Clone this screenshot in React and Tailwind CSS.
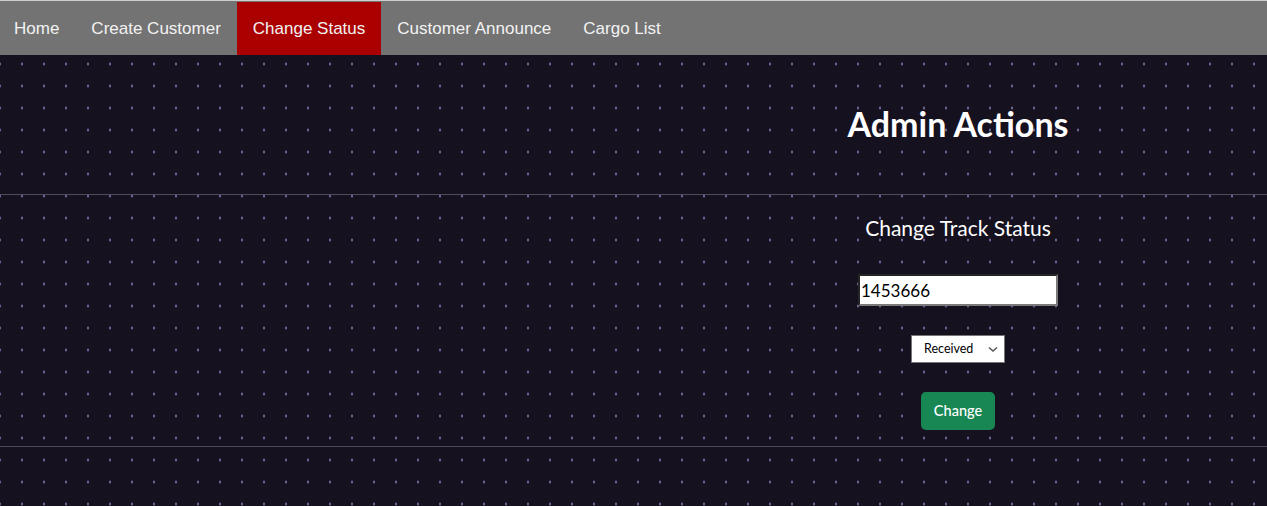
import React from "react";

export default function App() {
  const navItems = ["Home", "Create Customer", "Change Status", "Customer Announce", "Cargo List"];
  return (
    <div className="min-h-[506px] bg-[#15111f] bg-[image:radial-gradient(ellipse_0.8px_1.3px,#6a6494_0.7px,transparent_1.2px)] bg-[size:22px_22px] bg-[position:-11px_9px] font-['Lato',sans-serif]">
      <nav className="border-t border-[#cfcfcf] bg-[#737373] pt-[1px] font-['Liberation_Sans',Arial,sans-serif] text-[17px] text-[#f2f2f2]">
        <div className="-ml-[2px] flex">
          {navItems.map((item) => (
            <a
              key={item}
              className={
                "flex h-[53px] items-center px-4 " +
                (item === "Change Status" ? "bg-[#aa0000]" : "")
              }
            >
              {item}
            </a>
          ))}
        </div>
      </nav>
      <div className="flex">
        <div className="w-[649px]" />
        <div className="flex h-[139px] flex-1 justify-center pt-[49px]">
          <h1 className="text-[34px] font-bold leading-[40px] text-white">Admin Actions</h1>
        </div>
      </div>
      <div className="h-px bg-[#4f4a5c]" />
      <div className="flex">
        <div className="w-[649px]" />
        <div className="flex flex-1 flex-col items-center pt-[19px] pb-[16px]">
          <h2 className="text-[21px] leading-[28px] text-white">Change Track Status</h2>
          <input
            defaultValue="1453666"
            className="mt-[32px] h-[32px] w-[200px] border-2 border-[#7a7a7a] [border-style:inset] bg-white px-[1px] text-[17px] text-black outline-none"
          />
          <div className="relative mt-[29px] h-[28px] w-[94px] border border-[#767676] bg-white">
            <div className="flex h-full items-center pl-[12px] text-[12.5px] text-black">Received</div>
            <svg className="absolute right-[6px] top-[10px]" width="10" height="7" viewBox="0 0 10 7">
              <path d="M1 1.5 L5 5 L9 1.5" fill="none" stroke="#555" strokeWidth="1.5" />
            </svg>
          </div>
          <button className="mt-[29px] h-[38px] w-[74px] rounded-[5px] bg-[#198754] text-[14.5px] font-medium text-white">
            Change
          </button>
        </div>
      </div>
      <div className="h-px bg-[#4f4a5c]" />
    </div>
  );
}
